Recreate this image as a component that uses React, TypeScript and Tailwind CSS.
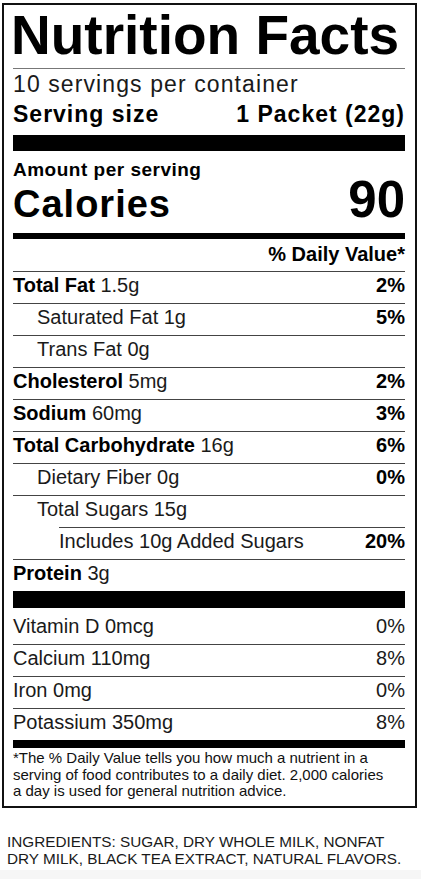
export default function App() {
  const font = { fontFamily: '"Liberation Sans", Arial, sans-serif' }

  const nutrients = [
    { name: 'Total Fat', amount: '1.5g', dv: '2%', bold: true, indent: 0 },
    { name: 'Saturated Fat', amount: '1g', dv: '5%', bold: false, indent: 1 },
    { name: 'Trans Fat', amount: '0g', dv: '', bold: false, indent: 1 },
    { name: 'Cholesterol', amount: '5mg', dv: '2%', bold: true, indent: 0 },
    { name: 'Sodium', amount: '60mg', dv: '3%', bold: true, indent: 0 },
    { name: 'Total Carbohydrate', amount: '16g', dv: '6%', bold: true, indent: 0 },
    { name: 'Dietary Fiber', amount: '0g', dv: '0%', bold: false, indent: 1 },
    { name: 'Total Sugars', amount: '15g', dv: '', bold: false, indent: 1 },
    { name: 'Includes 10g Added Sugars', amount: '', dv: '20%', bold: false, indent: 2 },
    { name: 'Protein', amount: '3g', dv: '', bold: true, indent: 0 },
  ]

  const vitamins = [
    { name: 'Vitamin D 0mcg', dv: '0%' },
    { name: 'Calcium 110mg', dv: '8%' },
    { name: 'Iron 0mg', dv: '0%' },
    { name: 'Potassium 350mg', dv: '8%' },
  ]

  return (
    <div className="w-[421px] h-[879px] bg-white flex flex-col overflow-hidden text-[#1a1a1a]" style={font}>
      <div className="mt-[3px] ml-[2px] w-[415px] border-2 border-[#111] pl-[9px] pr-[10px] pb-[6px]">
        {/* title */}
        <div className="pt-[3px] -ml-[2px] text-[55px] leading-[55px] font-bold text-black">Nutrition Facts</div>
        <div className="mt-[5px] h-[1px] bg-[#777]" />

        <div className="h-[30px] text-[23px] leading-[30px] tracking-[1.1px]">10 servings per container</div>
        <div className="h-[30px] flex justify-between text-[23px] leading-[30px] font-bold tracking-[1px] text-black">
          <span>Serving size</span>
          <span>1 Packet (22g)</span>
        </div>
        <div className="mt-[6px] h-[16px] bg-black" />

        {/* calories */}
        <div className="mt-[8px] text-[19px] leading-[21px] font-bold tracking-[0.5px] text-black">Amount per serving</div>
        <div className="flex justify-between items-baseline font-bold text-black">
          <span className="text-[38px] leading-[40px] tracking-[1px]">Calories</span>
          <span className="text-[51px] leading-[40px]">90</span>
        </div>
        <div className="mt-[9px] h-[6px] bg-black" />

        <div className="pt-[3px] pb-[5px] text-right text-[20px] leading-[24px] font-bold text-black">% Daily Value*</div>

        {/* nutrients */}
        {nutrients.map((n) => (
          <div key={n.name} className={n.indent === 2 ? 'pl-[46px]' : ''}>
            <div className="h-[1px] bg-[#444]" />
            <div className="h-[31px] flex justify-between text-[20px] leading-[26px]">
              <span className={n.indent === 1 ? 'pl-[24px]' : ''}>
                {n.bold ? <span className="font-bold text-black">{n.name}</span> : <span>{n.name}</span>}
                {n.amount ? ' ' + n.amount : ''}
              </span>
              <span className="font-bold text-black">{n.dv}</span>
            </div>
          </div>
        ))}
        <div className="h-[17px] bg-black" />

        {/* vitamins */}
        {vitamins.map((v, i) => (
          <div key={v.name}>
            {i > 0 && <div className="h-[1px] bg-[#444]" />}
            <div
              className={
                i === 0
                  ? 'h-[36px] pt-[5px] flex justify-between text-[20px] leading-[26px]'
                  : 'h-[31px] flex justify-between text-[20px] leading-[26px]'
              }
            >
              <span>{v.name}</span>
              <span>{v.dv}</span>
            </div>
          </div>
        ))}
        <div className="h-[8px] bg-black" />

        <div className="mt-[2px] text-[15px] leading-[16.6px] text-[#111]">
          *The % Daily Value tells you how much a nutrient in a<br />
          serving of food contributes to a daily diet. 2,000 calories<br />
          a day is used for general nutrition advice.
        </div>
      </div>

      <div className="mt-[25px] ml-[7px] text-[15.3px] leading-[17.5px] text-[#1a1a1a]">
        INGREDIENTS: SUGAR, DRY WHOLE MILK, NONFAT<br />
        DRY MILK, BLACK TEA EXTRACT, NATURAL FLAVORS.
      </div>

      <div className="flex-1" />
      <div className="h-[9px] bg-[#f6f6f6]" />
    </div>
  )
}
